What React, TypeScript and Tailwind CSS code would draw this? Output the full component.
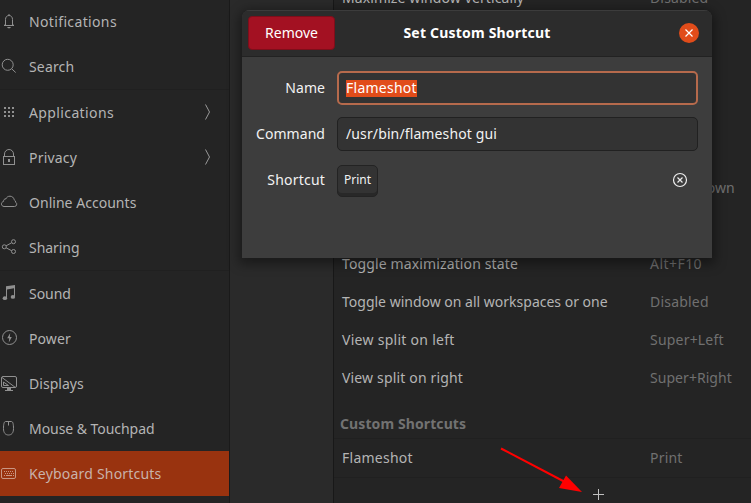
import React from 'react';

type NavItem = { label: string; tracking: string; icon: React.ReactNode; more?: boolean; active?: boolean };

function Glyph({ children }: { children: React.ReactNode }) {
  return (
    <svg width="18" height="19" viewBox="0 0 18 19" fill="none" stroke="currentColor" strokeWidth="1" className="shrink-0">
      {children}
    </svg>
  );
}

const bell = (
  <Glyph>
    <path d="M4 13.500h10M5.500 13.500V7.500C5.500 5 7 3.500 9 3.500s3.500 1.500 3.500 4v6M9 2v1.500M4.500 13.500l1-1.500M13.500 13.500l-1-1.500" />
    <path d="M7 15h4l-1 1.200H8z" fill="currentColor" stroke="none" />
  </Glyph>
);
const search = (
  <Glyph>
    <circle cx="7.700" cy="7.800" r="5.500" />
    <path d="M11.700 11.800l4 3.700" />
  </Glyph>
);
const grid = (
  <Glyph>
    <g fill="currentColor" stroke="none">
      {[4, 8, 12].map((y) => [4, 8, 12].map((x) => <rect key={`${x}-${y}`} x={x} y={y} width="2" height="2" />))}
    </g>
  </Glyph>
);
const lock = (
  <Glyph>
    <rect x="3.500" y="8.500" width="11" height="8" />
    <path d="M4.500 8.500V6a4.500 4.500 0 0 1 9 0v2.500" />
    <rect x="8" y="11" width="2" height="3" fill="currentColor" stroke="none" />
  </Glyph>
);
const cloud = (
  <Glyph>
    <path d="M4 13.500h10.500a2.300 2.300 0 0 0 1.200-4.200 3 3 0 0 0-1.500-2.500C13.800 4.500 12 3.200 10 3.200 8 3.200 6.700 4.100 6 5.800 4.300 5.800 3.500 6.800 3.600 8.400 .6 9.200.7 13.200 4 13.500z" />
  </Glyph>
);
const share = (
  <Glyph>
    <circle cx="4.300" cy="8.800" r="2" />
    <circle cx="13.500" cy="3.700" r="2" />
    <circle cx="13.500" cy="13.500" r="2" />
    <path d="M6.100 7.800l5.500-3M6.100 9.800l5.500 2.900" />
  </Glyph>
);
const music = (
  <Glyph>
    <g fill="currentColor" stroke="none">
      <path d="M6 2.200l9-1.200v11.700h-1V4.300L7 5.500V14H6z" />
      <ellipse cx="4.900" cy="14.200" rx="2.200" ry="1.900" />
      <ellipse cx="12.900" cy="12.900" rx="2.200" ry="1.900" />
    </g>
  </Glyph>
);
const power = (
  <Glyph>
    <circle cx="9.500" cy="8.500" r="7" />
    <path d="M10.200 4L7.200 9.300h2L8.800 13.500 11.800 8H9.800z" fill="currentColor" stroke="none" />
  </Glyph>
);
const display = (
  <Glyph>
    <rect x="1.500" y="2.500" width="15" height="11" rx="1.500" />
    <path d="M2 3.500l13 9.700M3.500 8v3.500h5zM5 16.500h8" />
    <path d="M7 13.500h4v3H7z" fill="currentColor" stroke="none" />
  </Glyph>
);
const mouse = (
  <Glyph>
    <path d="M5.500 2.500h6c1.500 0 2 3 2 7 0 4.500-2 6.500-5 6.500s-5-2-5-6.500c0-4 .5-7 2-7zM8.500 2.500v4" />
  </Glyph>
);
const keyboard = (
  <Glyph>
    <rect x="1.500" y="4.500" width="14" height="10" rx="1.500" />
    <path d="M4 7.500h10M5 9.500h9M4 11.500h1M13 11.500h1" strokeDasharray="1 1" />
    <path d="M6 11.500h6" />
  </Glyph>
);

const groups: NavItem[][] = [
  [
    { label: 'Notifications', tracking: 'tracking-[0.36px]', icon: bell },
    { label: 'Search', tracking: 'tracking-[0.15px]', icon: search },
  ],
  [
    { label: 'Applications', tracking: 'tracking-[0.38px]', icon: grid, more: true },
    { label: 'Privacy', tracking: 'tracking-[0.2px]', icon: lock, more: true },
    { label: 'Online Accounts', tracking: 'tracking-[0.03px]', icon: cloud },
    { label: 'Sharing', tracking: 'tracking-[-0.05px]', icon: share },
  ],
  [
    { label: 'Sound', tracking: 'tracking-[-0.05px]', icon: music },
    { label: 'Power', tracking: 'tracking-[0.1px]', icon: power },
    { label: 'Displays', tracking: 'tracking-[0.03px]', icon: display },
    { label: 'Mouse & Touchpad', tracking: 'tracking-[-0.05px]', icon: mouse },
    { label: 'Keyboard Shortcuts', tracking: 'tracking-[0.2px]', icon: keyboard, active: true },
  ],
];

type Shortcut = { name: string; nameTracking?: string; keys: string; keyTracking?: string };

const shortcuts: Shortcut[] = [
  { name: 'Maximize window vertically', nameTracking: 'tracking-[0.1px]', keys: 'Disabled', keyTracking: 'tracking-[0.15px]' },
  { name: '', keys: '' },
  { name: '', keys: '' },
  { name: '', keys: '' },
  { name: '', keys: '' },
  { name: '', keys: 'Super+Down' },
  { name: '', keys: '' },
  { name: 'Toggle maximization state', nameTracking: 'tracking-[0.13px]', keys: 'Alt+F10', keyTracking: 'tracking-[0.45px]' },
  { name: 'Toggle window on all workspaces or one', keys: 'Disabled', keyTracking: 'tracking-[0.2px]' },
  { name: 'View split on left', nameTracking: 'tracking-[0.28px]', keys: 'Super+Left', keyTracking: 'tracking-[0.2px]' },
  { name: 'View split on right', nameTracking: 'tracking-[0.16px]', keys: 'Super+Right', keyTracking: 'tracking-[0.05px]' },
];

function ShortcutRow({ name, nameTracking = '', keys, keyTracking = '' }: Shortcut) {
  return (
    <div className="flex h-[38px] shrink-0 items-center pl-2">
      <span className={`w-[308px] shrink-0 ${nameTracking}`}>{name}</span>
      <span className={`text-[#707070] ${keyTracking}`}>{keys}</span>
    </div>
  );
}

function Sidebar() {
  return (
    <nav className="-mt-px flex w-[230px] shrink-0 flex-col border-r border-[#1a1a1a] bg-[#242424]">
      {groups.map((items, index) => (
        <div key={index} className={index ? 'border-t border-[#202020]' : ''}>
          {items.map((item) => (
            <div key={item.label} className={`flex h-[45px] items-center pr-[18px] ${item.active ? 'bg-[#99330f]' : ''}`}>
              <span className={`flex w-[29px] ${item.active ? 'text-[#c99683]' : 'text-[#909090]'}`}>{item.icon}</span>
              <span className={`flex-1 ${item.tracking} ${item.active ? 'text-[#c9b2aa]' : ''}`}>{item.label}</span>
              {item.more && (
                <svg width="7" height="16" viewBox="0 0 7 16" fill="none" stroke="#999" strokeWidth="1" className="-mt-px">
                  <path d="M1.500 .5l4 7.500-4 7.500" />
                </svg>
              )}
            </div>
          ))}
        </div>
      ))}
    </nav>
  );
}

function Dialog() {
  return (
    <section className="absolute left-[242px] top-[10px] flex h-[248px] w-[470px] flex-col overflow-hidden rounded-t-lg bg-[#3d3d3d] text-[#f2f2f2] shadow-[0_3px_12px_3px_rgba(0,0,0,0.4)]">
      <header className="grid h-[47px] shrink-0 grid-cols-[88px_1fr_88px] items-start border-t border-b border-t-[#3c3c3c] border-b-[#222] bg-[#2c2c2c] px-1.5 pt-[5px]">
        <button className="h-[34px] w-[87px] rounded-[4px] border border-[#7e0e1a] bg-[#a31122] pb-px text-white">Remove</button>
        <h1 className="pt-[7px] text-center font-bold leading-5 tracking-[0.2px] text-white">Set Custom Shortcut</h1>
        <button aria-label="Close" className="mt-[7px] mr-[7px] flex size-5 items-center justify-center justify-self-end rounded-full bg-[#e14c1a]">
          <svg width="8" height="8" viewBox="0 0 8 8" stroke="#fff" strokeWidth="1.2">
            <path d="M.5 .5l7 7M7.500 .5l-7 7" />
          </svg>
        </button>
      </header>
      <div className="grid grid-cols-[83px_361px] gap-x-3 gap-y-3 pt-[14px]">
        <label className="flex h-[34px] items-center justify-end tracking-[0.05px]">Name</label>
        <div className="flex h-[34px] items-center rounded-[5px] border-2 border-[#b66a4c] bg-[#333] pl-[7px]">
          <span className="mt-px h-[17px] bg-[#e14c1a] leading-[15px] tracking-[0.25px] text-white">Flameshot</span>
        </div>
        <label className="flex h-[34px] items-center justify-end tracking-[0.05px]">Command</label>
        <div className="flex h-[34px] items-center rounded-[5px] border border-[#212121] bg-[#333] pl-2 tracking-[0.12px]">/usr/bin/flameshot gui</div>
        <label className="flex h-[34px] items-center justify-end tracking-[0.2px]">Shortcut</label>
        <div className="flex h-[34px] items-center justify-between pr-[10px]">
          <kbd className="mt-0.5 flex h-8 w-[41px] items-center justify-center rounded-[5px] border border-[#232323] bg-[#333] pb-0.5 font-['Noto_Sans',sans-serif] text-xs shadow-[inset_0_-3px_#282828]">Print</kbd>
          <svg width="16" height="16" viewBox="0 0 16 16" fill="none" stroke="#eee" strokeWidth="1.200">
            <circle cx="8" cy="8" r="6.500" />
            <path d="M5.500 5.500l5 5M10.500 5.500l-5 5" />
          </svg>
        </div>
      </div>
    </section>
  );
}

export default function App() {
  return (
    <main className="relative flex h-[503px] w-[751px] overflow-hidden bg-[#242424] font-['Noto_Sans',sans-serif] text-[14px] leading-5 whitespace-nowrap text-[#b4b4b4]">
      <Sidebar />
      <div className="w-[104px] shrink-0 border-r border-[#181818] bg-[#2a2a2a]" />
      <div className="-mt-[21px] flex flex-1 flex-col">
        {shortcuts.map((shortcut, index) => (
          <ShortcutRow key={index} {...shortcut} />
        ))}
        <h2 className="flex h-[42px] shrink-0 items-end border-b border-[#202020] pb-1 pl-1.5 font-bold tracking-[0.1px] text-[#727272]">Custom Shortcuts</h2>
        <div className="border-b border-[#202020]">
          <ShortcutRow name="Flameshot" nameTracking="tracking-[0.25px]" keys="Print" keyTracking="tracking-[0.2px]" />
        </div>
        <button aria-label="Add shortcut" className="ml-[259px] mt-[11px] size-[11px] shrink-0">
          <svg width="11" height="11" viewBox="0 0 11 11" stroke="#c0c0c0" strokeWidth="1">
            <path d="M5.500 0v11M0 5.500h11" />
          </svg>
        </button>
      </div>
      <Dialog />
      <svg width="84" height="48" viewBox="0 0 84 48" className="absolute left-[500px] top-[446px]">
        <path d="M1 2.500L65 36" stroke="#f00" strokeWidth="2" />
        <path d="M82 46L66 29.500 59 42z" fill="#f00" />
      </svg>
    </main>
  );
}
